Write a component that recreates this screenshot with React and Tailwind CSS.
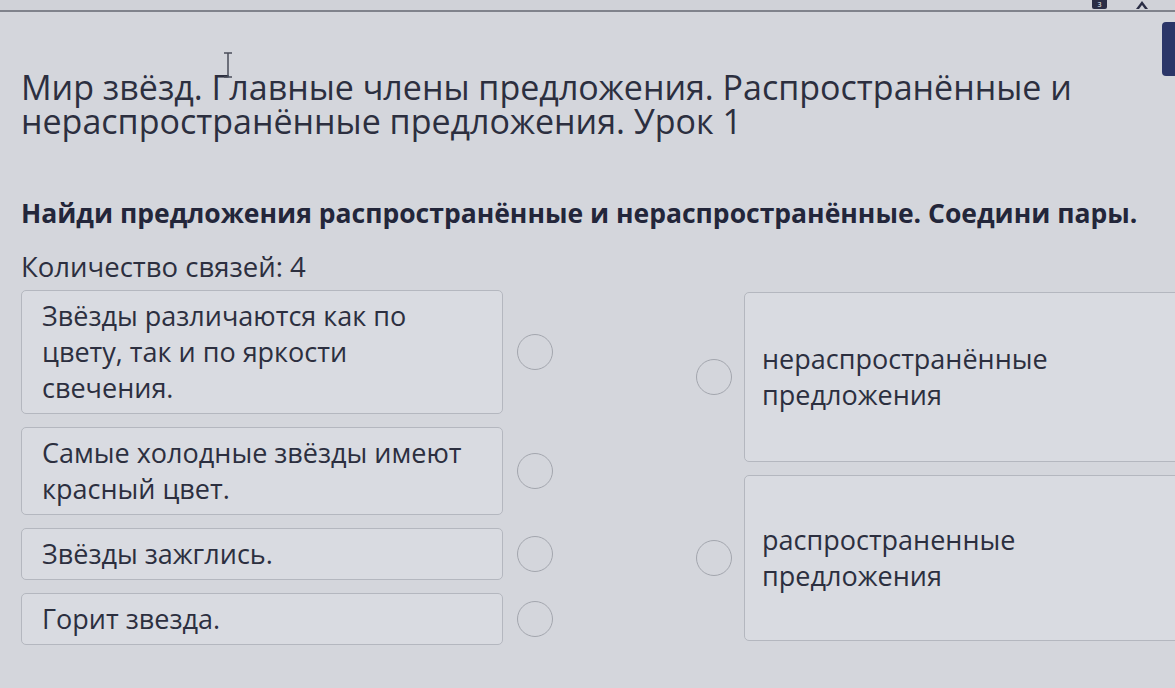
const leftItems = [
	"Звёзды различаются как по цвету, так и по яркости свечения.",
	"Самые холодные звёзды имеют красный цвет.",
	"Звёзды зажглись.",
	"Горит звезда.",
];

const rightItems = [
	{ text: "нераспространённые предложения", height: "h-[170px]" },
	{ text: "распространенные предложения", height: "h-[166px]" },
];

const Dot = () => (
	<span className="block h-[36px] w-[36px] shrink-0 rounded-full border-[1.5px] border-[#a3a6ae]" />
);

export default function App() {
	return (
		<div
			className="relative h-[688px] w-[1175px] overflow-hidden bg-[#d4d6dc] text-[#2c2f3f]"
			style={{ fontFamily: '"Open Sans", "Noto Sans", sans-serif' }}
		>
			{/* top strip */}
			<div className="flex h-[12px] items-start justify-end gap-[28px] border-b-2 border-[#80838c] bg-[#d0d2d8] pr-[26px]">
				<span className="flex h-[9px] w-[15px] items-center justify-center rounded-b-[2px] bg-[#2a2d45] text-[7px] leading-none text-white">
					3
				</span>
				<svg width="14" height="9" viewBox="0 0 14 9">
					<path d="M1 9 L7 1 L13 9 L10 9 L7 5 L4 9 Z" fill="#2a2d45" />
				</svg>
			</div>
			<div className="absolute right-0 top-[22px] h-[54px] w-[13px] rounded-l-[4px] bg-[#2b3668]" />

			{/* text cursor */}
			<svg
				className="absolute left-[222px] top-[52px]"
				width="12"
				height="26"
				viewBox="0 0 12 26"
			>
				<path d="M2 1 H10 M6 1 V25 M2 25 H10" stroke="#4a4d5a" strokeWidth="1.5" fill="none" />
			</svg>

			<div className="pl-[21px] pt-[58px]">
				<h1 className="text-[34px] leading-[34px]">
					Мир звёзд. Главные члены предложения. Распространённые и
					<br />
					нераспространённые предложения. Урок 1
				</h1>

				<p className="mt-[60px] text-[26.5px] font-bold leading-[30px] text-[#23263a]">
					Найди предложения распространённые и нераспространённые. Соедини пары.
				</p>

				<p className="mt-[23px] text-[27.5px] leading-[32px]">Количество связей: 4</p>

				<div className="mt-[7px] flex items-start">
					<div className="flex w-[482px] flex-col gap-[13px]">
						{leftItems.map((t) => (
							<div
								key={t}
								className="w-[482px] rounded-[5px] border border-[#b4b7bf] bg-[#d9dbe1] py-[7px] pl-[20px] pr-[20px] text-[27px] leading-[36px]"
							>
								{t}
							</div>
						))}
					</div>

					<div className="flex flex-col gap-[13px] pl-[14px]">
						{leftItems.map((t, i) => (
							<div
								key={t}
								className={`flex items-center ${
									i === 0 ? "h-[124px]" : i === 1 ? "h-[88px]" : "h-[52px]"
								}`}
							>
								<Dot />
							</div>
						))}
					</div>

					<div className="ml-[143px] mt-[2px] flex flex-col gap-[13px]">
						{rightItems.map((r) => (
							<div key={r.text} className={`flex items-center ${r.height}`}>
								<Dot />
								<div
									className={`ml-[12px] flex w-[460px] items-center rounded-[5px] border border-[#b4b7bf] bg-[#d9dbe1] pl-[17px] text-[27px] leading-[36px] ${r.height}`}
								>
									<span className="w-[300px]">{r.text}</span>
								</div>
							</div>
						))}
					</div>
				</div>
			</div>
		</div>
	);
}
